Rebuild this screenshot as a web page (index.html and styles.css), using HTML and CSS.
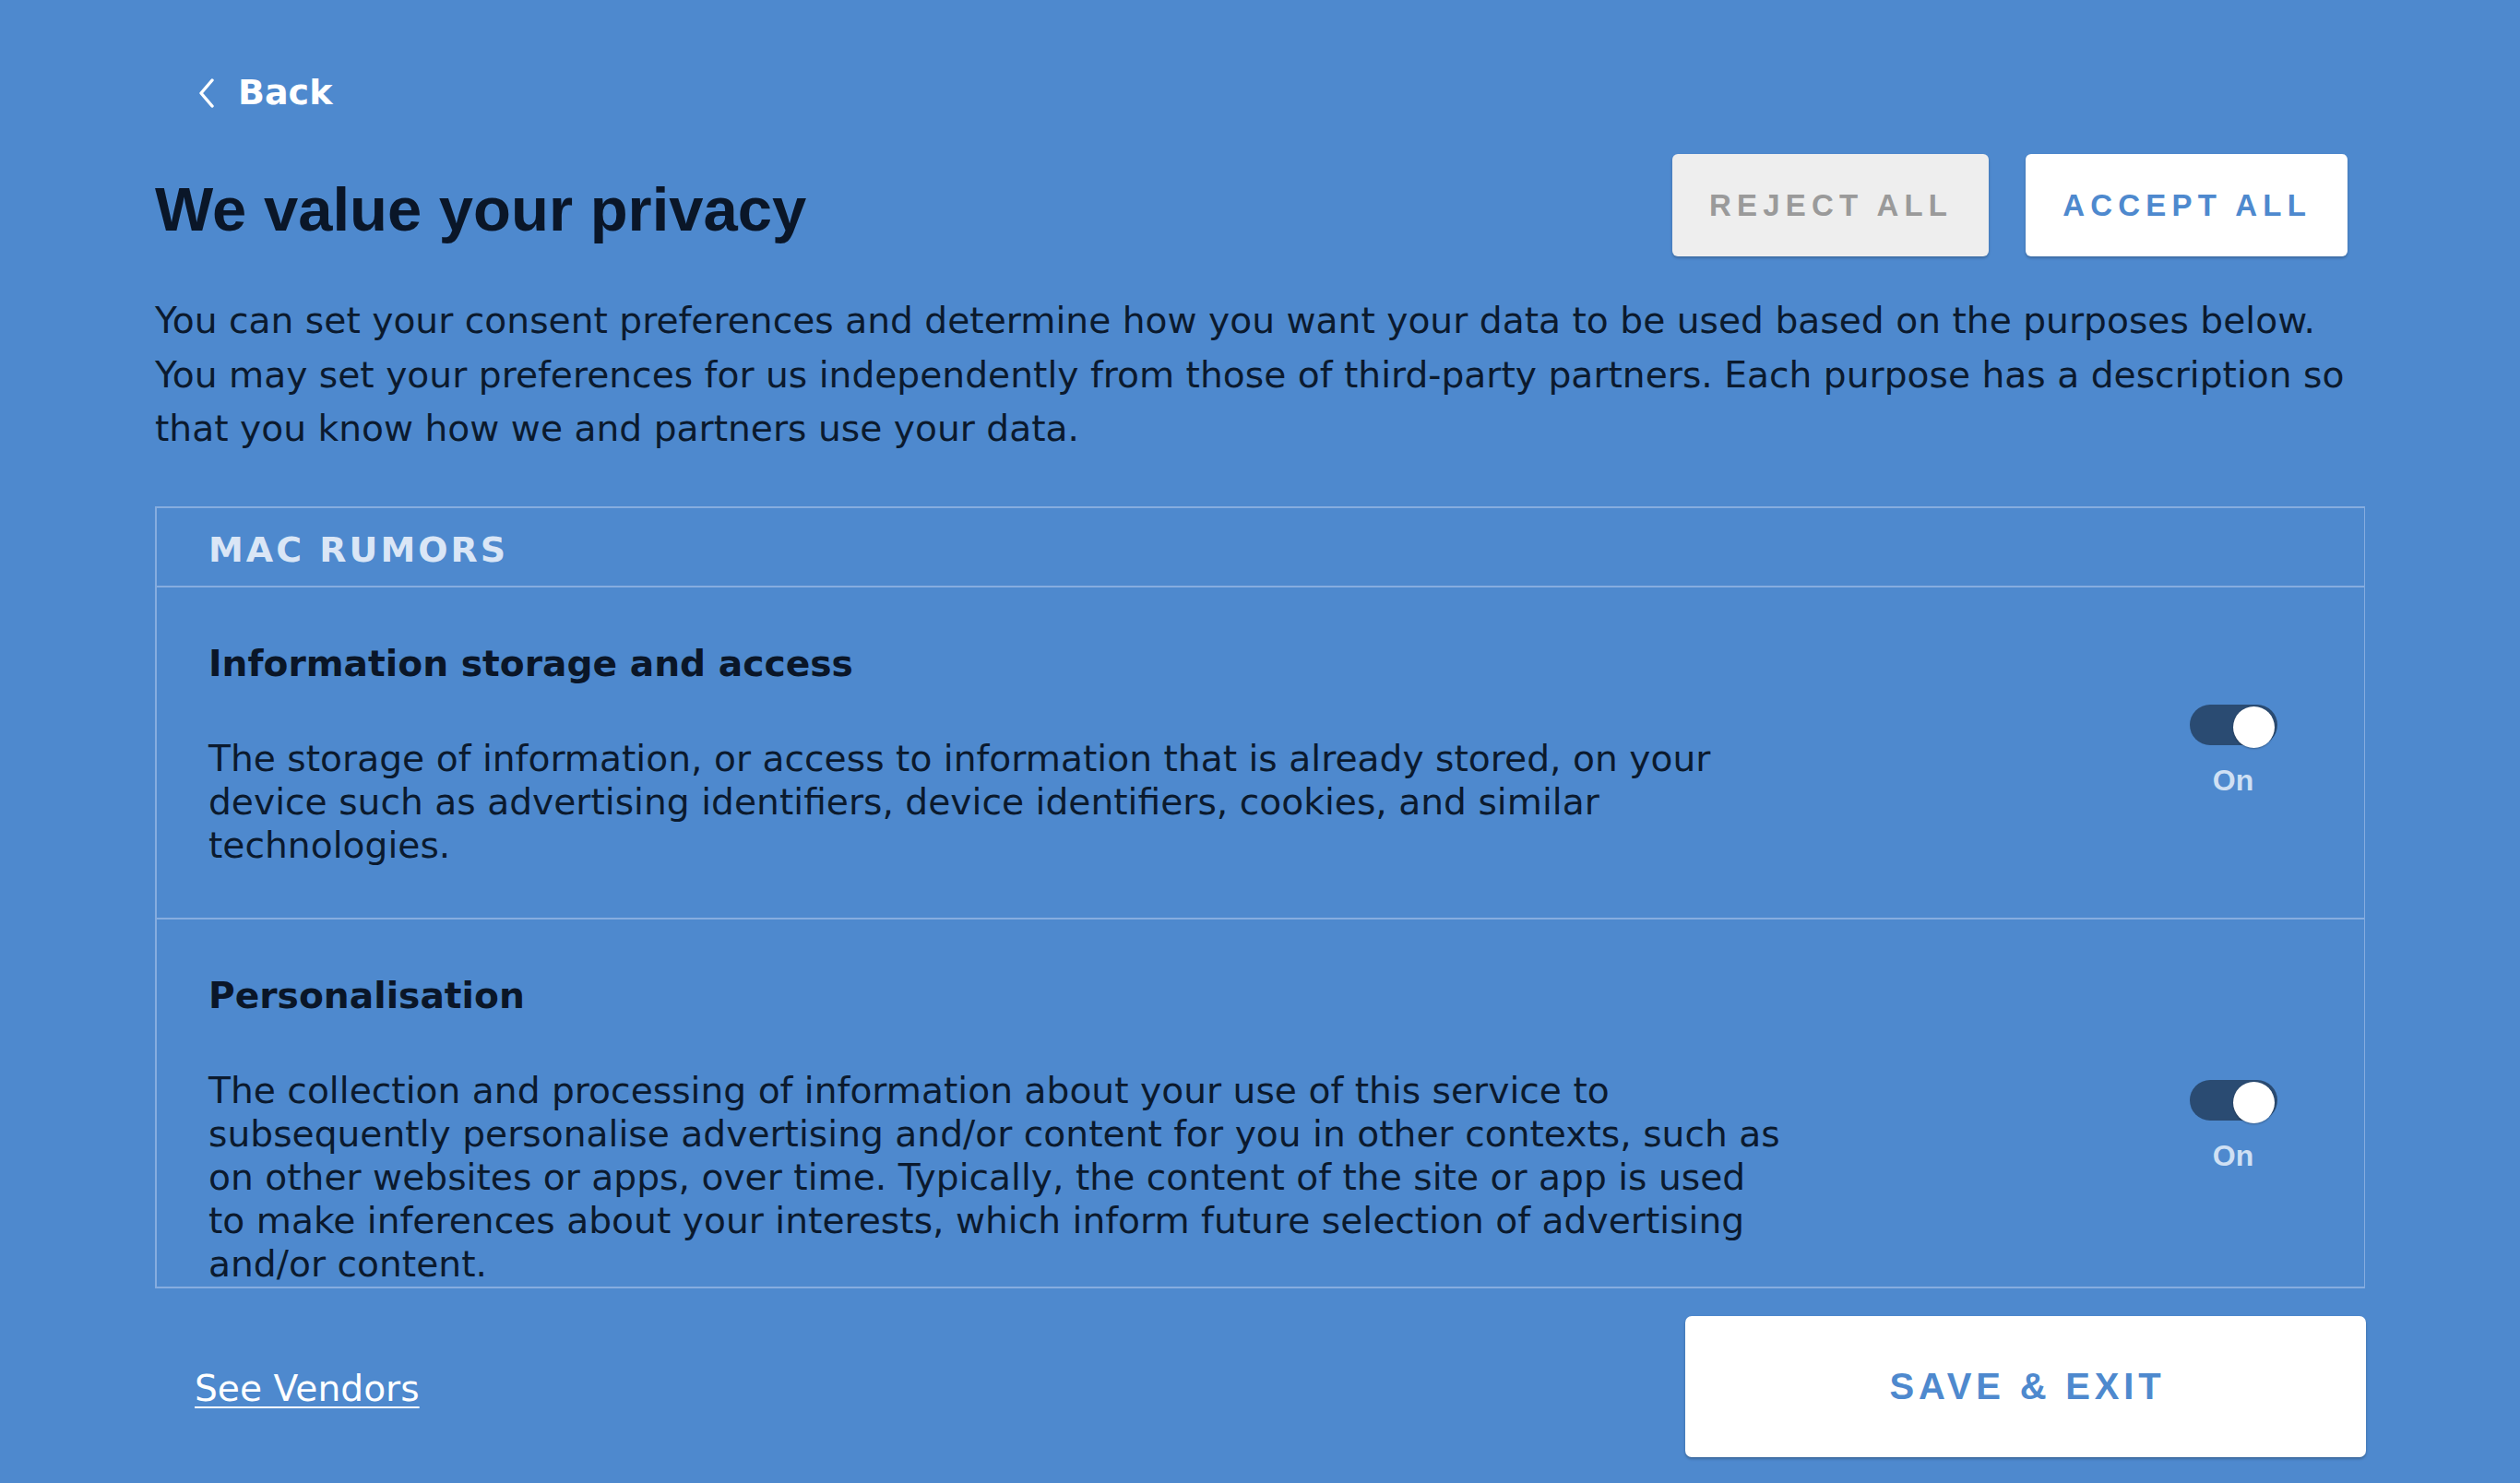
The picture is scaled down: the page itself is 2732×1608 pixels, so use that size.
FILE: index.html
```html
<!DOCTYPE html>
<html lang="en">
<head>
<meta charset="utf-8">
<title>We value your privacy</title>
<link rel="stylesheet" href="styles.css">
</head>
<body>
<div class="page">
  <a class="back" href="#">
    <svg class="back-icon" width="18" height="32" viewBox="0 0 18 32" aria-hidden="true">
      <polyline points="15,2 3,16 15,30" fill="none" stroke="#ffffff" stroke-width="3.4" stroke-linecap="round" stroke-linejoin="round"/>
    </svg>
    <span>Back</span>
  </a>

  <div class="header-row">
    <h1 class="title">We value your privacy</h1>
    <div class="actions">
      <button class="btn btn-reject">REJECT ALL</button>
      <button class="btn btn-accept">ACCEPT ALL</button>
    </div>
  </div>

  <p class="intro">You can set your consent preferences and determine how you want your data to be used based on the purposes below. You may set your preferences for us independently from those of third-party partners. Each purpose has a description so that you know how we and partners use your data.</p>

  <section class="box">
    <div class="box-header">MAC RUMORS</div>
    <div class="purpose">
      <div class="purpose-text">
        <h2 class="purpose-title">Information storage and access</h2>
        <p class="purpose-desc">The storage of information, or access to information that is already stored, on your device such as advertising identifiers, device identifiers, cookies, and similar technologies.</p>
      </div>
      <div class="toggle-col">
        <span class="toggle"><span class="knob"></span></span>
        <span class="toggle-label">On</span>
      </div>
    </div>
    <div class="purpose">
      <div class="purpose-text">
        <h2 class="purpose-title">Personalisation</h2>
        <p class="purpose-desc">The collection and processing of information about your use of this service to subsequently personalise advertising and/or content for you in other contexts, such as on other websites or apps, over time. Typically, the content of the site or app is used to make inferences about your interests, which inform future selection of advertising and/or content.</p>
      </div>
      <div class="toggle-col">
        <span class="toggle"><span class="knob"></span></span>
        <span class="toggle-label">On</span>
      </div>
    </div>
  </section>

  <div class="footer">
    <a class="vendors" href="#">See Vendors</a>
    <button class="btn-save">SAVE &amp; EXIT</button>
  </div>
</div>
</body>
</html>
```

FILE: styles.css
```css
html, body {
  margin: 0;
  padding: 0;
}
body {
  background: #4e89ce;
  width: 2732px;
  height: 1608px;
  overflow: hidden;
  font-family: "DejaVu Sans", Verdana, sans-serif;
  color: #0b1a2e;
}
.page {
  width: 2396px;
  margin: 0 auto;
  padding-top: 78px;
  box-sizing: border-box;
}
.back {
  display: flex;
  align-items: center;
  margin-left: 47px;
  height: 44px;
  color: #ffffff;
  text-decoration: none;
  font-weight: bold;
  font-size: 38px;
  line-height: 44px;
}
.back-icon {
  display: block;
  margin-right: 25px;
  margin-top: 1px;
}
.header-row {
  display: flex;
  align-items: center;
  justify-content: space-between;
  margin-top: 45px;
  padding-right: 19px;
}
.title {
  margin: 0;
  padding-top: 8px;
  font-family: "Liberation Sans", Arial, sans-serif;
  font-weight: bold;
  font-size: 67px;
  line-height: 77px;
  color: #0a1628;
}
.actions {
  display: flex;
  gap: 40px;
}
.btn {
  height: 111px;
  padding: 0 39px 0 40px;
  border: none;
  border-radius: 6px;
  box-shadow: 0 2px 3px rgba(0, 0, 0, 0.22);
  font-family: "Liberation Sans", Arial, sans-serif;
  font-weight: bold;
  font-size: 33px;
  letter-spacing: 6.2px;
  cursor: pointer;
}
.btn-reject {
  background: #eeeeee;
  color: #9a9a9a;
}
.btn-accept {
  background: #ffffff;
  color: #4e89ce;
}
.intro {
  margin: 41px 0 0 0;
  font-size: 39.2px;
  line-height: 58.5px;
  color: #0b1a2e;
}
.box {
  margin-top: 54px;
  height: 848px;
  box-sizing: border-box;
  border: 2px solid #86addf;
  border-right-width: 1px;
  overflow: hidden;
}
.box-header {
  padding: 23px 57px 16px 56px;
  font-weight: bold;
  font-size: 38px;
  line-height: 45.6px;
  letter-spacing: 3px;
  color: #dae6f6;
  border-bottom: 2px solid #86addf;
}
.purpose {
  display: flex;
  align-items: center;
  justify-content: space-between;
  padding: 60px 57px 55px 56px;
  border-bottom: 2px solid #86addf;
}
.purpose-text {
  flex: 0 0 1712px;
}
.purpose-title {
  margin: 0;
  font-weight: bold;
  font-size: 39.2px;
  line-height: 46.8px;
  color: #0a1628;
}
.purpose-desc {
  margin: 55px 0 0 0;
  font-size: 39.2px;
  line-height: 47px;
  color: #0b1a2e;
}
.toggle-col {
  flex: 0 0 170px;
  display: flex;
  flex-direction: column;
  align-items: center;
  margin-bottom: 8px;
}
.toggle {
  position: relative;
  display: block;
  width: 95px;
  height: 44px;
  border-radius: 22px;
  background: #2a4b72;
}
.knob {
  position: absolute;
  top: 2px;
  right: 3px;
  width: 45px;
  height: 45px;
  border-radius: 50%;
  background: #ffffff;
  box-shadow: 0 1px 2px rgba(0, 0, 0, 0.3);
}
.toggle-label {
  margin-top: 20px;
  font-family: "Liberation Sans", Arial, sans-serif;
  font-weight: bold;
  font-size: 32px;
  line-height: 37px;
  color: #cfe0f4;
}
.footer {
  display: flex;
  align-items: center;
  justify-content: space-between;
  margin-top: 30px;
}
.vendors {
  margin-left: 43px;
  margin-top: 5px;
  font-size: 39.2px;
  line-height: 46px;
  color: #ffffff;
  text-decoration: underline;
  text-decoration-thickness: 2px;
  text-underline-offset: 6px;
}
.btn-save {
  width: 738px;
  height: 153px;
  margin-right: -1px;
  border: none;
  border-radius: 7px;
  background: #ffffff;
  box-shadow: 0 2px 3px rgba(0, 0, 0, 0.25);
  font-family: "Liberation Sans", Arial, sans-serif;
  font-weight: bold;
  font-size: 40px;
  letter-spacing: 4.8px;
  color: #4e89ce;
  padding: 0 0 0 4px;
  cursor: pointer;
}
```
